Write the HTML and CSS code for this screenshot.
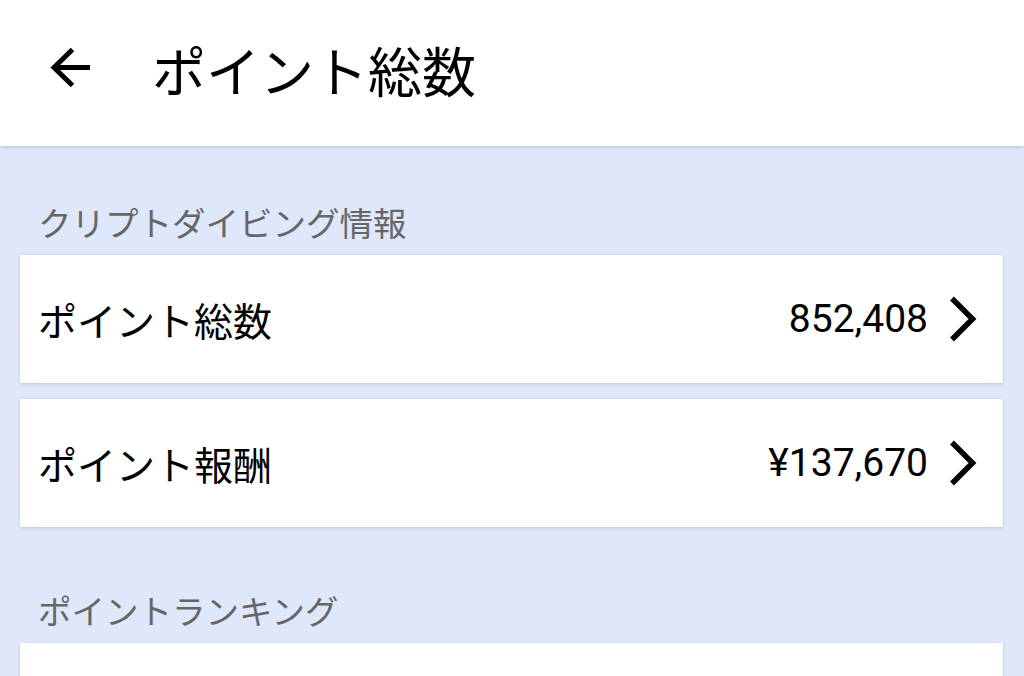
FILE: index.html
```html
<!DOCTYPE html>
<html lang="ja">
<head>
<meta charset="utf-8">
<link rel="stylesheet" href="styles.css">
</head>
<body>
<header class="appbar">
  <svg class="back" viewBox="0 0 44 44" width="44" height="44"><path d="M42 21.5 H6 M24.5 3.5 L6 21.5 L24.5 39.5" fill="none" stroke="#000" stroke-width="5"/></svg>
  <h1 class="title">ポイント総数</h1>
</header>
<main class="content">
  <div class="label first">クリプトダイビング情報</div>
  <div class="card">
    <span class="name">ポイント総数</span>
    <span class="value">852,408</span>
    <svg class="chev" viewBox="0 0 29 48" width="29" height="48"><path d="M4 3.5 L24.5 24 L4 44.5" fill="none" stroke="#000" stroke-width="5.5"/></svg>
  </div>
  <div class="card">
    <span class="name">ポイント報酬</span>
    <span class="value">¥137,670</span>
    <svg class="chev" viewBox="0 0 29 48" width="29" height="48"><path d="M4 3.5 L24.5 24 L4 44.5" fill="none" stroke="#000" stroke-width="5.5"/></svg>
  </div>
  <div class="label second">ポイントランキング</div>
  <div class="card"></div>
</main>
</body>
</html>
```
FILE: styles.css
```css
html, body {
  margin: 0;
  padding: 0;
  height: 100%;
  overflow: hidden;
}
body {
  background: #dfe7fb;
  font-family: Roboto, "Noto Sans CJK JP", sans-serif;
  color: #000;
}
.appbar {
  height: 146px;
  background: #fff;
  display: flex;
  align-items: center;
  box-shadow: 0 1px 4px rgba(60, 70, 110, 0.25);
  position: relative;
  z-index: 1;
}
.back {
  margin-left: 48px;
  margin-top: -10px;
}
.title {
  margin: -6px 0 0 60px;
  font-family: "Noto Sans CJK JP", sans-serif;
  font-weight: 400;
  font-size: 54px;
  line-height: 1;
}
.content {
  padding: 52px 21px 0 20px;
}
.label {
  font-family: "Noto Sans CJK JP", sans-serif;
  font-size: 33.5px;
  line-height: 48px;
  color: #666;
  margin: 0 0 9px 18px;
}
.label.second {
  margin-top: 59px;
}
.card {
  background: #fff;
  height: 128px;
  display: flex;
  align-items: center;
  padding: 0 26px 0 18px;
  margin-bottom: 16px;
  box-shadow: 0 1px 3px rgba(60, 70, 110, 0.22);
}
.name {
  font-family: "Noto Sans CJK JP", sans-serif;
  font-size: 39px;
  flex: 1;
}
.value {
  font-family: Roboto, sans-serif;
  font-size: 39px;
  margin-right: 20px;
}
```
